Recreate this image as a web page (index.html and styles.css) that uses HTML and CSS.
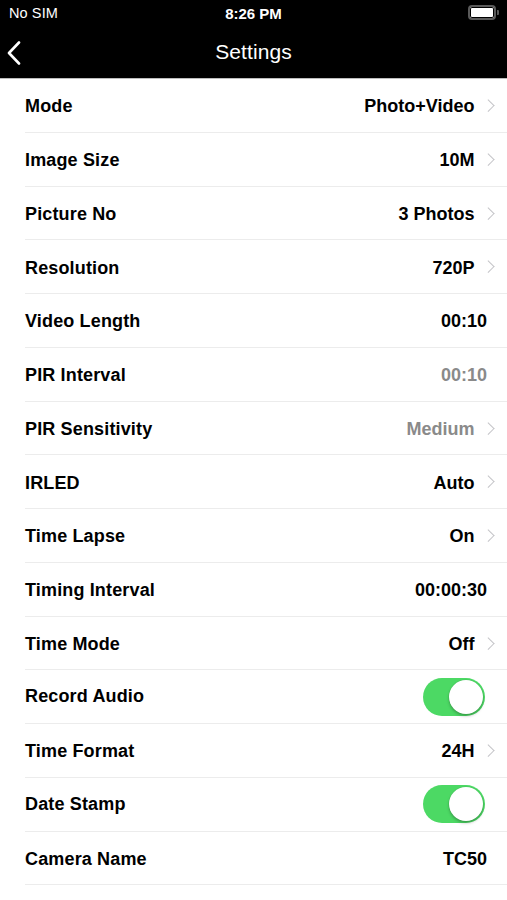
FILE: index.html
```html
<!DOCTYPE html>
<html>
<head>
<meta charset="utf-8">
<link rel="stylesheet" href="styles.css">
</head>
<body>
<header class="topbar">
  <div class="status">
    <span class="carrier">No SIM</span>
    <span class="time">8:26 PM</span>
    <span class="battery"><span class="battery-fill"></span><span class="battery-nub"></span></span>
  </div>
  <div class="nav">
    <svg class="back" width="14" height="24" viewBox="0 0 14 24"><path d="M12 1.5 L2 12 L12 22.5" fill="none" stroke="#fff" stroke-width="2.6" stroke-linecap="round" stroke-linejoin="round"/></svg>
    <span class="title">Settings</span>
  </div>
</header>
<main class="list">
  <div class="row chev"><span class="label">Mode</span><span class="value">Photo+Video</span><i class="chevron"></i></div>
  <div class="row chev"><span class="label">Image Size</span><span class="value">10M</span><i class="chevron"></i></div>
  <div class="row chev"><span class="label">Picture No</span><span class="value">3 Photos</span><i class="chevron"></i></div>
  <div class="row chev"><span class="label">Resolution</span><span class="value">720P</span><i class="chevron"></i></div>
  <div class="row"><span class="label">Video Length</span><span class="value">00:10</span></div>
  <div class="row"><span class="label">PIR Interval</span><span class="value dim">00:10</span></div>
  <div class="row chev"><span class="label">PIR Sensitivity</span><span class="value dim">Medium</span><i class="chevron"></i></div>
  <div class="row chev"><span class="label">IRLED</span><span class="value">Auto</span><i class="chevron"></i></div>
  <div class="row chev"><span class="label">Time Lapse</span><span class="value">On</span><i class="chevron"></i></div>
  <div class="row"><span class="label">Timing Interval</span><span class="value">00:00:30</span></div>
  <div class="row chev"><span class="label">Time Mode</span><span class="value">Off</span><i class="chevron"></i></div>
  <div class="row sw"><span class="label">Record Audio</span><span class="switch on"><span class="knob"></span></span></div>
  <div class="row chev"><span class="label">Time Format</span><span class="value">24H</span><i class="chevron"></i></div>
  <div class="row sw"><span class="label">Date Stamp</span><span class="switch on"><span class="knob"></span></span></div>
  <div class="row"><span class="label">Camera Name</span><span class="value">TC50</span></div>
</main>
</body>
</html>
```
FILE: styles.css
```css
* { box-sizing: border-box; }
html, body { margin: 0; padding: 0; background: #fff; }
body { font-family: "Liberation Sans", Arial, sans-serif; color: #000; width: 507px; }

.topbar { background: #000; color: #fff; border-bottom: 1px solid #bdbdbd; }
.status { height: 25px; display: flex; align-items: center; justify-content: space-between; padding: 0 8px 0 9px; position: relative; font-size: 14.5px; }
.carrier { letter-spacing: 0.1px; }
.time { position: absolute; left: 0; right: 0; text-align: center; font-weight: bold; font-size: 15px; top: 5px; line-height: 17px; }
.battery { position: relative; width: 31px; height: 15px; display: flex; align-items: center; }
.battery-fill { width: 28px; height: 15px; border: 2px solid #5a5a5a; border-radius: 4px; background: #fff; box-shadow: inset 0 0 0 1px #000; }
.battery-nub { width: 2px; height: 5px; background: #5a5a5a; border-radius: 0 1px 1px 0; margin-left: 1px; }

.nav { height: 53px; position: relative; display: flex; align-items: center; justify-content: center; }
.back { position: absolute; left: 7px; top: 16px; }
.title { font-size: 21px; letter-spacing: 0.1px; }

.list { padding-left: 25px; }
.row { height: 53.75px; border-bottom: 1px solid #ececec; display: flex; align-items: center; padding-top: 3px; padding-right: 20px; font-size: 18px; font-weight: bold; }
.row.chev { padding-right: 12px; }
.row.sw { padding-top: 0; padding-right: 22px; }
.label { flex: 1; letter-spacing: 0.15px; }
.value.dim { color: #8a8a8a; }
.chevron { width: 8.5px; height: 8.5px; border-right: 1.6px solid #c4c4c8; border-top: 1.6px solid #c4c4c8; transform: rotate(45deg); margin-left: 9px; margin-right: 3px; margin-top: -3px; }

.switch { width: 62px; height: 38px; border-radius: 19px; background: #4cd964; position: relative; }
.knob { position: absolute; right: 2px; top: 2px; width: 34px; height: 34px; border-radius: 50%; background: #fff; box-shadow: 0 2px 3px rgba(0,0,0,0.25), 0 0 0 0.5px rgba(0,0,0,0.08); }
```
